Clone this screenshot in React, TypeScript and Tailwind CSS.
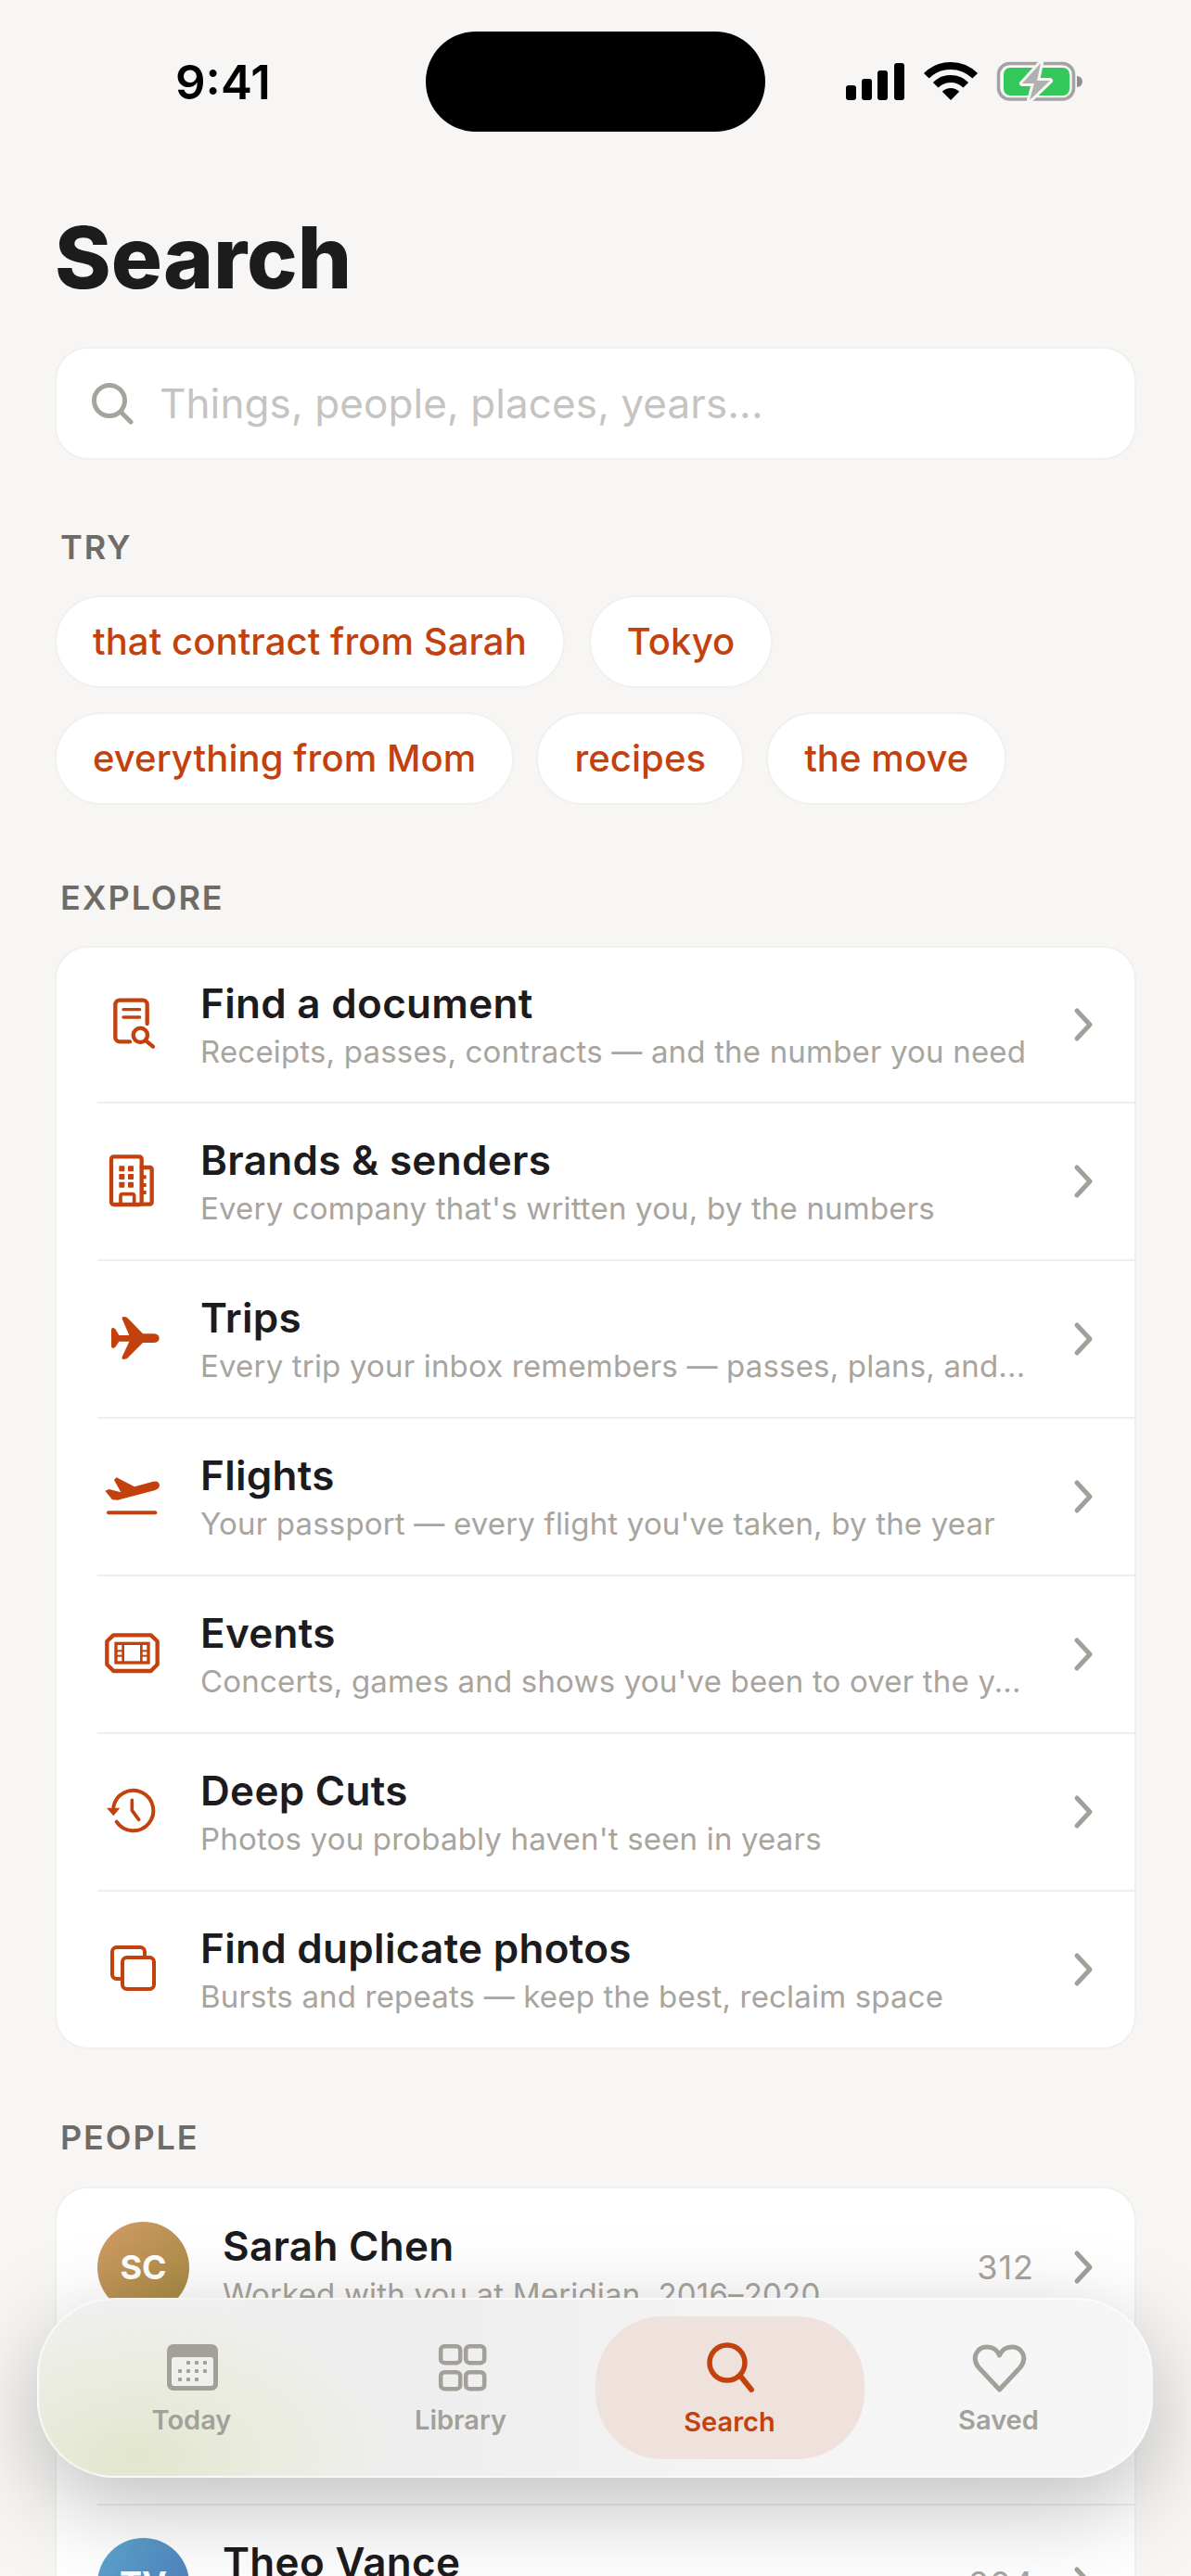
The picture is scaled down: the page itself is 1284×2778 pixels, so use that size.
import React from "react";

const ORANGE = "#c2410c";

function Chevron() {
  return (
    <svg width="22" height="38" viewBox="0 0 22 38" fill="none" className="shrink-0">
      <path d="M4 4l14 15L4 34" stroke="#a3a09a" strokeWidth="5" strokeLinecap="round" strokeLinejoin="round" />
    </svg>
  );
}

function Icon({ children }: { children: React.ReactNode }) {
  return (
    <svg width="80" height="80" viewBox="0 0 240 240" fill="none" stroke={ORANGE} strokeLinecap="round" strokeLinejoin="round" className="shrink-0">
      {children}
    </svg>
  );
}

const DocIcon = () => (
  <Icon>
    <path d="M105 175H72a14 14 0 0 1-14-14V55a14 14 0 0 1 14-14h75a14 14 0 0 1 14 14v62" strokeWidth="13" />
    <path d="M84 71H137M84 96H137" strokeWidth="10" />
    <circle cx="139" cy="154" r="23" strokeWidth="13" />
    <path d="M157 172L180 191" strokeWidth="13" />
  </Icon>
);
const BuildingIcon = () => (
  <Icon>
    <rect x="45" y="40" width="98" height="155" rx="8" strokeWidth="13" />
    <path d="M143 75H170a6 6 0 0 1 6 6V188a6 6 0 0 1-6 6H143" strokeWidth="13" />
    <path d="M75 195V167a6 6 0 0 1 6-6h32a6 6 0 0 1 6 6v28" strokeWidth="11" />
    <g fill={ORANGE} stroke="none">
      <rect x="70" y="70" width="18" height="18" rx="2" />
      <rect x="99" y="70" width="18" height="18" rx="2" />
      <rect x="70" y="96" width="18" height="18" rx="2" />
      <rect x="99" y="96" width="18" height="18" rx="2" />
      <rect x="70" y="122" width="18" height="18" rx="2" />
      <rect x="99" y="122" width="18" height="18" rx="2" />
      <rect x="147" y="100" width="11" height="12" />
      <rect x="147" y="126" width="11" height="12" />
      <rect x="147" y="150" width="11" height="12" />
    </g>
  </Icon>
);
const PlaneIcon = () => (
  <Icon>
    <path
      d="M45 90Q45 83 52 84L58 88L70 108H103L80 55Q78 47 88 48L96 50L147 103H180Q200 103 200 118Q200 132 180 132H147L96 183L85 186Q78 186 80 178L103 128H70L58 146L52 150Q45 150 45 143Z"
      fill={ORANGE}
      stroke="none"
    />
  </Icon>
);
const TakeoffIcon = () => (
  <Icon>
    <path
      d="M25 101L38 96L76 106L54 66L62 58L120 88L180 71Q200 68 201 84Q200 95 185 100L65 131L48 130Z"
      fill={ORANGE}
      stroke="none"
    />
    <path d="M36 172H187" strokeWidth="12" />
  </Icon>
);
const TicketIcon = () => (
  <Icon>
    <path d="M52 58H173L194 78V153L173 174H52L31 153V78Z" strokeWidth="13" />
    <rect x="60" y="85" width="105" height="62" strokeWidth="10" strokeLinejoin="miter" />
    <path d="M83 85V147M142 85V147" strokeWidth="8" />
    <g fill={ORANGE} stroke="none">
      <rect x="60" y="106" width="23" height="6" />
      <rect x="60" y="122" width="23" height="6" />
      <rect x="142" y="106" width="23" height="6" />
      <rect x="142" y="122" width="23" height="6" />
    </g>
  </Icon>
);
const ClockIcon = () => (
  <Icon>
    <path d="M52 104A65 65 0 1 1 62 152" strokeWidth="12" />
    <path d="M30 107H73L52 133Z" fill={ORANGE} stroke="none" />
    <path d="M112 82V115L134 145" strokeWidth="11" />
  </Icon>
);
const CopyIcon = () => (
  <Icon>
    <path d="M153 77V62a14 14 0 0 0-14-14H62a14 14 0 0 0-14 14V136a14 14 0 0 0 14 14h15" strokeWidth="12" />
    <rect x="81" y="81" width="102" height="102" rx="14" strokeWidth="12" />
  </Icon>
);

const explore = [
  { t: "Find a document", s: "Receipts, passes, contracts — and the number you need", i: <DocIcon /> },
  { t: "Brands & senders", s: "Every company that's written you, by the numbers", i: <BuildingIcon /> },
  { t: "Trips", s: "Every trip your inbox remembers — passes, plans, and...", i: <PlaneIcon /> },
  { t: "Flights", s: "Your passport — every flight you've taken, by the year", i: <TakeoffIcon /> },
  { t: "Events", s: "Concerts, games and shows you've been to over the y...", i: <TicketIcon /> },
  { t: "Deep Cuts", s: "Photos you probably haven't seen in years", i: <ClockIcon /> },
  { t: "Find duplicate photos", s: "Bursts and repeats — keep the best, reclaim space", i: <CopyIcon /> },
];

function SectionLabel({ children, className }: { children: React.ReactNode; className: string }) {
  return <div className={`text-[36px] leading-[44px] font-semibold tracking-[1.9px] text-[#6f6c67] pl-[6px] ${className}`}>{children}</div>;
}

function Chip({ children }: { children: React.ReactNode }) {
  return (
    <div className="h-[100px] flex items-center px-[39px] rounded-full bg-white border-2 border-[#f2f0ed] text-[40px] tracking-[0.08px] font-medium text-[#c2410c]">
      {children}
    </div>
  );
}

function StatusBar() {
  return (
    <div className="flex items-center pt-[34px]">
      <div className="w-[459px] pl-[189px] text-[51px] font-semibold leading-none text-black">9:41</div>
      <div className="w-[366px] h-[108px] rounded-full bg-black" />
      <svg width="262" height="48" viewBox="0 0 262 48" className="ml-[80px]">
        <rect x="7" y="28" width="11" height="16" rx="3" fill="#000" />
        <rect x="24" y="21" width="11" height="23" rx="3" fill="#000" />
        <rect x="41" y="12" width="11" height="32" rx="3" fill="#000" />
        <rect x="59" y="4" width="11" height="40" rx="3" fill="#000" />
        <path d="M93.8 17.8A37 37 0 0 1 146.2 17.8M103.7 27.7A23 23 0 0 1 136.3 27.7" stroke="#000" strokeWidth="8" fill="none" />
        <path d="M120 44L110.8 34.8A13 13 0 0 1 129.2 34.8Z" fill="#000" />
        <rect x="171.5" y="4.5" width="81" height="38.5" rx="12" fill="none" stroke="#a3a3a3" strokeWidth="3.5" />
        <rect x="177" y="9" width="71" height="30" rx="7" fill="#34c759" />
        <path d="M256 18a6 6 0 0 1 0 12Z" fill="#8f8f8f" />
        <path d="M217 4L197 26H210L205 44L227 23H213Z" fill="#b0b0b0" stroke="#f7f6f4" strokeWidth="6" paintOrder="stroke" strokeLinejoin="round" />
      </svg>
    </div>
  );
}

function RowText({ title, sub }: { title?: string; sub?: string }) {
  return (
    <div className="flex-1 min-w-0">
      <div className="h-[52px] text-[44px] leading-[52px] tracking-[0.3px] font-semibold text-[#1c1c1e]">{title}</div>
      <div className="mt-[6px] h-[40px] text-[33px] leading-[40px] tracking-[0.18px] text-[#a8a49e] whitespace-nowrap">{sub}</div>
    </div>
  );
}

function PersonRow({ initials, name, sub, count, avatar, top }: { initials: string; name: string; sub?: string; count: string; avatar: string; top?: boolean }) {
  return (
    <div className={`ml-[44px] flex items-center gap-[36px] h-[170px] pr-[44px] ${top ? "" : "border-t-2 border-[#efeeec]"}`}>
      <div className={`w-[99px] h-[99px] rounded-full shrink-0 flex items-center justify-center text-white font-bold text-[36px] ${avatar}`}>{initials}</div>
      <RowText title={name} sub={sub} />
      <div className="flex items-center gap-[42px]">
        <div className="text-[36px] tracking-[1px] text-[#a8a49e]">{count}</div>
        <Chevron />
      </div>
    </div>
  );
}

function Tab({ label, active, children }: { label: string; active?: boolean; children: React.ReactNode }) {
  return (
    <div className={`w-[290px] h-[154px] flex flex-col items-center pt-[25px] rounded-[72px] ${active ? "bg-[#efe1dc]" : ""}`}>
      {children}
      <div className={`text-[29px] leading-[36px] font-semibold ${active ? "mt-[11px] text-[#c2410c]" : "mt-[9px] text-[#a3a09a]"}`}>{label}</div>
    </div>
  );
}

export default function App() {
  return (
    <div className="relative w-[1284px] h-[2778px] overflow-hidden bg-[#f7f6f4] font-['Inter',sans-serif]">
      <StatusBar />
      <div className="pl-[59px] pr-[59px]">
        <h1 className="mt-[86px] text-[92px] leading-[100px] font-extrabold text-[#1c1c1e]">Search</h1>
        <div className="mt-[46px] h-[122px] flex items-center bg-white border-2 border-[#f2f0ed] rounded-[36px] pl-[37px]">
          <svg width="46" height="46" viewBox="0 0 46 46" fill="none" stroke="#a6a39d" strokeWidth="5" strokeLinecap="round" className="shrink-0">
            <circle cx="20" cy="20" r="16.5" />
            <path d="M32 32L43 43" />
          </svg>
          <input
            readOnly
            placeholder="Things, people, places, years..."
            className="ml-[28px] flex-1 bg-transparent outline-none text-[44px] tracking-[0.1px] placeholder:text-[#c6c4c0]"
          />
        </div>

        <SectionLabel className="mt-[72px]">TRY</SectionLabel>
        <div className="mt-[30px] flex flex-col gap-[26px]">
          <div className="flex gap-[26px]">
            <Chip>that contract from Sarah</Chip>
            <Chip>Tokyo</Chip>
          </div>
          <div className="flex gap-[24px]">
            <Chip>everything from Mom</Chip>
            <Chip>recipes</Chip>
            <Chip>the move</Chip>
          </div>
        </div>

        <SectionLabel className="mt-[78px]">EXPLORE</SectionLabel>
        <div className="mt-[30px] bg-white border-2 border-[#f2f0ed] rounded-[36px] overflow-hidden">
          {explore.map((r, i) => (
            <div key={r.t} className={`ml-[44px] flex items-center gap-[31px] pr-[44px] ${i === 0 ? "h-[166px]" : "h-[170px] border-t-2 border-[#efeeec]"}`}>
              {r.i}
              <RowText title={r.t} sub={r.s} />
              <Chevron />
            </div>
          ))}
        </div>

        <SectionLabel className="mt-[73px]">PEOPLE</SectionLabel>
        <div className="mt-[31px] bg-white border-2 border-[#f2f0ed] rounded-[36px] overflow-hidden">
          <PersonRow top initials="SC" name="Sarah Chen" sub="Worked with you at Meridian, 2016–2020" count="312" avatar="bg-gradient-to-br from-[#d19c66] to-[#a4893f]" />
          <div className="ml-[44px] h-[170px]" />
          <PersonRow initials="TV" name="Theo Vance" count="204" avatar="bg-gradient-to-br from-[#5fa9d2] to-[#4a74b4]" />
        </div>
      </div>

      <div className="absolute left-[40px] top-[2478px] w-[1203px] h-[194px] rounded-[84px] bg-[radial-gradient(ellipse_280px_170px_at_105px_170px,#e1e6cd_0%,#e9ecdd_45%,transparent_100%),linear-gradient(90deg,#f0f0f0,#eeeeee_35%,#f5f5f5_70%,#f6f6f6)] border-2 border-white/60 shadow-[0_30px_100px_rgba(0,0,0,0.26)] flex items-center justify-center">
        <Tab label="Today">
          <svg width="60" height="60" viewBox="0 0 60 60">
            <rect x="3" y="5" width="55" height="50" rx="7" fill="#a3a09a" />
            <rect x="8" y="19" width="45" height="31" rx="3" fill="#efefed" />
            <g fill="#a3a09a">
              {[[26, 25], [35, 25], [44, 25], [17, 34], [26, 34], [35, 34], [44, 34], [17, 43], [26, 43], [35, 43]].map(([x, y]) => (
                <rect key={`${x}-${y}`} x={x - 2} y={y - 2} width="4" height="4" rx="1" />
              ))}
            </g>
          </svg>
        </Tab>
        <Tab label="Library">
          <svg width="60" height="60" viewBox="0 0 60 60" fill="none" stroke="#a3a09a" strokeWidth="4.5">
            <rect x="8.2" y="7.2" width="21" height="18" rx="4" />
            <rect x="35.2" y="7.2" width="20" height="18" rx="4" />
            <rect x="8.2" y="35.2" width="21" height="18" rx="4" />
            <rect x="35.2" y="35.2" width="20" height="18" rx="4" />
          </svg>
        </Tab>
        <Tab label="Search" active>
          <svg width="60" height="60" viewBox="0 0 60 60" fill="none" stroke="#c2410c" strokeWidth="5.5" strokeLinecap="round">
            <circle cx="27" cy="25" r="19" />
            <path d="M41 39L53 54" strokeWidth="6" />
          </svg>
        </Tab>
        <Tab label="Saved">
          <svg width="60" height="60" viewBox="0 0 60 60" fill="none" stroke="#a3a09a" strokeWidth="5" strokeLinejoin="round">
            <path d="M30.5 54L8 30C0 20 6 8 17 8C23 8 28 11 30.5 17C33 11 38 8 44 8C55 8 61 20 53 30Z" />
          </svg>
        </Tab>
      </div>
    </div>
  );
}
